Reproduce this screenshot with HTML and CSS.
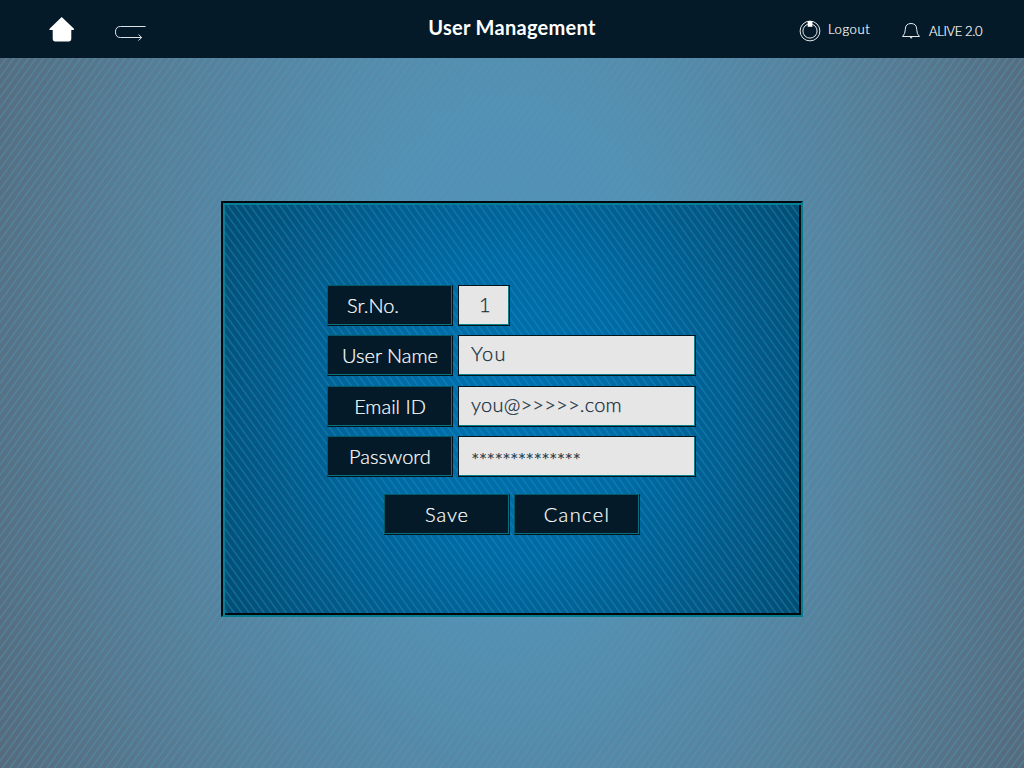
FILE: index.html
```html
<!DOCTYPE html>
<html lang="en">
<head>
<meta charset="utf-8">
<title>User Management</title>
<link rel="stylesheet" href="styles.css">
</head>
<body>
<header class="topbar">
  <nav class="nav">
    <svg class="home" width="26" height="26" viewBox="0 0 26 26"><path d="M12.7 1L25 12.7Q25.5 14 24 14H22.3V23Q22.3 25.4 20 25.4H6Q3.7 25.4 3.7 23V14H1Q-.2 14 .6 12.7Z" fill="#fff"/></svg>
    <svg class="back" width="32" height="17" viewBox="0 0 32 17"><path d="M31.5 2.5H6.5Q1.5 2.5 1.5 8T6.5 13.5H27.5M24.5 10.5L27.7 13.5L24.5 16.5" fill="none" stroke="#dce2e5" stroke-width="1"/></svg>
  </nav>
  <h1 class="title">User Management</h1>
  <div class="actions">
    <svg class="power" width="22" height="22" viewBox="0 0 22 22"><g fill="none" stroke="#e4e9eb"><circle cx="11" cy="11" r="9.9"/><circle cx="11" cy="11" r="7.1"/></g><path d="M8.7 1H13.4V6.8H8.7Z" fill="#fff"/></svg>
    <span class="logout">Logout</span>
    <svg class="bell" width="18" height="17" viewBox="0 0 18 17"><path d="M.5 14.5H17.5Q14.7 12 14.7 7.5Q14.7 1.5 9 1.5T3.3 7.5Q3.3 12 .5 14.5M8 14.7L9.2 16.3L10.2 14.7" fill="none" stroke="#e4e9eb"/></svg>
    <span class="version">ALIVE 2.0</span>
  </div>
</header>
<main class="stage">
  <form class="panel">
    <div class="row"><label class="tag"><span class="t-sr">Sr.No.</span></label><div class="field small"><span class="t-one">1</span></div></div>
    <div class="row"><label class="tag"><span class="t-user">User Name</span></label><div class="field"><span class="t-you">You</span></div></div>
    <div class="row"><label class="tag"><span class="t-email">Email ID</span></label><div class="field"><span class="t-mail">you@&gt;&gt;&gt;&gt;&gt;.com</span></div></div>
    <div class="row"><label class="tag"><span class="t-pass">Password</span></label><div class="field"><span class="t-stars">**************</span></div></div>
    <div class="buttons"><button type="button" class="tag"><span class="t-save">Save</span></button><button type="button" class="tag"><span class="t-cancel">Cancel</span></button></div>
  </form>
</main>
</body>
</html>
```
FILE: styles.css
```css
* { box-sizing: border-box; }
body { margin: 0; width: 1024px; height: 768px; overflow: hidden; font-family: Lato, "Open Sans", sans-serif; color: #fff; }
.topbar { height: 58px; background: #041a28; display: grid; grid-template-columns: 400px 1fr 400px; }
.nav { display: flex; padding: 16px 0 0 49px; }
.back { margin: 8px 0 0 39px; }
.title { margin: 0; padding-top: 15px; text-align: center; font-size: 20px; line-height: 24px; font-weight: 700; letter-spacing: .3px; white-space: nowrap; }
.actions { display: flex; padding-left: 175px; font-size: 13px; line-height: 16px; font-weight: 300; white-space: nowrap; -webkit-text-stroke: .2px; }
.power { margin-top: 20px; }
.logout { margin: 21px 0 0 7px; width: 44px; letter-spacing: .6px; }
.bell { margin: 22px 0 0 30px; }
.version { margin: 23px 0 0 9px; letter-spacing: -.33px; }
.stage { height: 710px; padding: 143px 221px; background:
  repeating-linear-gradient(-54deg, transparent 0 3.3px, rgba(75,155,190,.36) 3.9px 5px, transparent 5.7px 6px),
  radial-gradient(ellipse 580px 900px at 512px 300px, #4f93bb 0%, #5590b2 30%, #587f98 66%, #56697a 100%); }
.panel { width: 582px; height: 416px; padding: 82px 0 0 104px; border: 2px solid #02090d; border-right-color: #087a8e; border-bottom-color: #087a8e; box-shadow: inset 2px 2px #087f98, inset -2px -2px #02090d; background:
  repeating-linear-gradient(54deg, transparent 0 3.3px, rgba(25,145,180,.4) 3.9px 5px, transparent 5.7px 6px),
  radial-gradient(ellipse 360px 400px at 50% 50%, #0071b2 0%, #006aa6 35%, #055887 70%, #034a70 100%); }
.row { display: flex; gap: 5px; height: 41px; margin-bottom: 9.3px; }
.tag { width: 126px; height: 41px; padding: 0; display: flex; justify-content: center; background: #041a28; border: 1px solid #045967; border-right: 1px solid #02151d; border-bottom: 1px solid #02151d; box-shadow: inset -1px -1px #08717f; color: #fff; border-radius: 0; font: 300 20px/39px Lato, "Open Sans", sans-serif; white-space: nowrap; -webkit-text-stroke: .2px; }
.field { width: 238px; height: 41px; padding-left: 12px; background: #e6e6e6; border: 1px solid #02151d; box-shadow: inset -1px -1px #087f8b; color: #142c3c; font-size: 20px; font-weight: 300; line-height: 35px; white-space: nowrap; -webkit-text-stroke: .25px; }
.small { width: 52px; padding-left: 20px; line-height: 37px; }
.buttons { display: flex; gap: 4px; padding: 7.8px 0 0 57px; }
.t-sr { margin-right: 34px; }
.t-user { line-height: 38px; }
.t-you { letter-spacing: 1.3px; }
.t-mail { letter-spacing: .25px; }
.t-stars { display: block; line-height: 47px; letter-spacing: -.7px; }
.t-save { letter-spacing: .9px; }
.t-cancel { letter-spacing: 1.4px; }
```
